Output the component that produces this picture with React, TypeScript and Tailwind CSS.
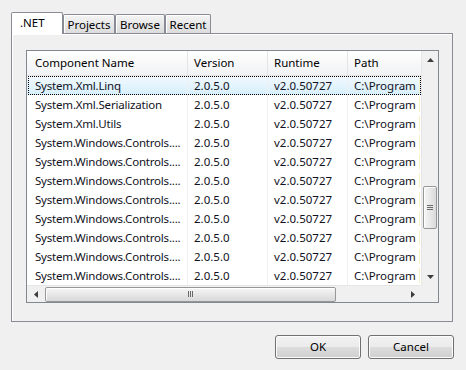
import React from "react";

const rows = [
  "System.Xml.Linq",
  "System.Xml.Serialization",
  "System.Xml.Utils",
  "System.Windows.Controls....",
  "System.Windows.Controls....",
  "System.Windows.Controls....",
  "System.Windows.Controls....",
  "System.Windows.Controls....",
  "System.Windows.Controls....",
  "System.Windows.Controls....",
  "System.Windows.Controls....",
];

function Tab({ label, active, w }: { label: string; active?: boolean; w: string }) {
  if (active) {
    return (
      <div
        className={`${w} h-[22px] -mb-px relative z-10 bg-white border border-b-0 border-[#898c95] rounded-t-[2px] flex items-start justify-start pl-[8px] pt-[4px] text-black`}
      >
        {label}
      </div>
    );
  }
  return (
    <div
      className={`${w} h-[19px] bg-gradient-to-b from-[#f4f4f4] to-[#dcdcdc] border border-b-0 border-[#898c95] rounded-t-[2px] shadow-[inset_1px_1px_0_#ffffff] flex items-center justify-center pt-[1px] text-black`}
    >
      {label}
    </div>
  );
}

function Button({ label }: { label: string }) {
  return (
    <div className="w-[86px] h-[24px] rounded-[3px] border border-[#707070] bg-[linear-gradient(#f2f2f2_0%,#ebebeb_50%,#dddddd_50%,#cfcfcf_100%)] shadow-[inset_0_0_0_1px_#fcfcfc] flex items-center justify-center text-black">
      {label}
    </div>
  );
}

export default function App() {
  return (
    <div
      className="w-[466px] h-[370px] bg-[#f0f0f0] text-[11.5px] leading-none overflow-hidden"
      style={{ fontFamily: '"Noto Sans", "Open Sans", sans-serif' }}
    >
      <div className="pt-[12px] pl-[11px] pr-[13px]">
        {/* Tabs */}
        <div className="flex items-end h-[21px]">
          <Tab label=".NET" active w="w-[52px]" />
          <Tab label="Projects" w="w-[52px]" />
          <Tab label="Browse" w="w-[50px]" />
          <Tab label="Recent" w="w-[46px]" />
        </div>
        {/* Panel */}
        <div className="h-[289px] border border-[#898c95] bg-[#f0f0f0] shadow-[inset_1px_1px_0_#ffffff] pt-[16px] pl-[14px]">
          {/* List view */}
          <div className="w-[413px] h-[253px] border border-[#828790] bg-white flex flex-col">
            <div className="flex h-[234px]">
              {/* Content */}
              <div className="w-[394px] flex flex-col">
                {/* Header */}
                <div className="flex h-[25px] bg-gradient-to-b from-white to-[#f1f2f4] border-b border-[#e5e5e5] text-black">
                  <div className="w-[161px] border-r border-[#e3e5e8] flex items-center pl-[8px] pb-[1px]">Component Name</div>
                  <div className="w-[80px] border-r border-[#e3e5e8] flex items-center pl-[6px] pb-[1px]">Version</div>
                  <div className="w-[80px] border-r border-[#e3e5e8] flex items-center pl-[6px] pb-[1px]">Runtime</div>
                  <div className="flex-1 flex items-center pl-[6px] pb-[1px]">Path</div>
                </div>
                {/* Rows */}
                {rows.map((name, i) => (
                  <div
                    key={i}
                    className={`relative flex h-[19px] text-[#111122] ${
                      i === 0 ? "bg-gradient-to-b from-[#f2f9fd] to-[#d6effc]" : ""
                    }`}
                  >
                    {i === 0 && (
                      <span className="absolute inset-y-0 left-[1px] right-0 border border-dotted border-black pointer-events-none" />
                    )}
                    <div className="w-[161px] border-r border-[#f0f0f0] flex items-center pl-[8px] whitespace-nowrap overflow-hidden tracking-[-0.2px]">
                      {name}
                    </div>
                    <div className="w-[80px] border-r border-[#f0f0f0] flex items-center pl-[6px]">2.0.5.0</div>
                    <div className="w-[80px] border-r border-[#f0f0f0] flex items-center pl-[6px]">v2.0.50727</div>
                    <div className="flex-1 flex items-center pl-[6px] whitespace-nowrap overflow-hidden">
                      C:\Program
                    </div>
                    <span className="absolute right-[1px] top-[2px] bottom-[2px] w-px bg-[#f7f0c2]" />
                  </div>
                ))}
              </div>
              {/* Vertical scrollbar */}
              <div className="w-[17px] h-full bg-[#f0f0f0] border-l border-[#e6e6e6] flex flex-col items-center">
                <div className="h-[17px] w-full flex items-center justify-center">
                  <svg width="7" height="4" viewBox="0 0 7 4">
                    <path d="M0 4 L3.5 0 L7 4 Z" fill="#3d3d3d" />
                  </svg>
                </div>
                <div className="h-[118px]" />
                <div className="w-[14px] h-[43px] rounded-[2px] border border-[#979797] bg-gradient-to-r from-[#f6f6f6] to-[#dadada] shadow-[inset_1px_1px_0_#ffffff] flex flex-col items-center justify-center gap-[1px]">
                  <div className="w-[6px] h-px bg-[#6a6a6a]" />
                  <div className="w-[6px] h-px bg-[#6a6a6a]" />
                  <div className="w-[6px] h-px bg-[#6a6a6a]" />
                </div>
                <div className="flex-1" />
                <div className="h-[17px] w-full flex items-center justify-center">
                  <svg width="7" height="4" viewBox="0 0 7 4">
                    <path d="M0 0 L3.5 4 L7 0 Z" fill="#3d3d3d" />
                  </svg>
                </div>
              </div>
            </div>
            {/* Horizontal scrollbar */}
            <div className="flex h-[17px]">
              <div className="w-[394px] h-full bg-[#f0f0f0] border-t border-[#e6e6e6] flex items-center">
                <div className="w-[17px] h-full flex items-center justify-center">
                  <svg width="4" height="7" viewBox="0 0 4 7">
                    <path d="M4 0 L0 3.5 L4 7 Z" fill="#3d3d3d" />
                  </svg>
                </div>
                <div className="w-[291px] h-[15px] ml-[1px] rounded-[2px] border border-[#979797] bg-gradient-to-b from-[#f6f6f6] to-[#d8d8d8] shadow-[inset_1px_1px_0_#ffffff] flex items-center justify-center gap-[1px]">
                  <div className="w-px h-[6px] bg-[#6a6a6a]" />
                  <div className="w-px h-[6px] bg-[#6a6a6a]" />
                  <div className="w-px h-[6px] bg-[#6a6a6a]" />
                </div>
                <div className="flex-1" />
                <div className="w-[17px] h-full flex items-center justify-center">
                  <svg width="4" height="7" viewBox="0 0 4 7">
                    <path d="M0 0 L4 3.5 L0 7 Z" fill="#3d3d3d" />
                  </svg>
                </div>
              </div>
              <div className="w-[17px] h-full bg-[#f0f0f0]" />
            </div>
          </div>
        </div>
      </div>
      {/* Buttons */}
      <div className="flex justify-end gap-[7px] pr-[12px] pt-[13px]">
        <Button label="OK" />
        <Button label="Cancel" />
      </div>
    </div>
  );
}
